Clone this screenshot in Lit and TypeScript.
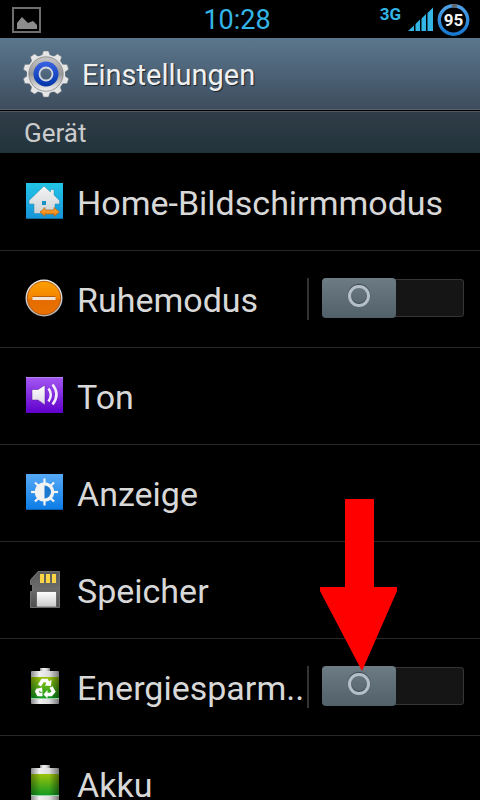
import { LitElement, html, css, svg, nothing, TemplateResult } from "lit";
import { customElement, property } from "lit/decorators.js";

const teeth = [0, 36, 72, 108, 144, 180, 216, 252, 288, 324];

const icons: Record<string, TemplateResult> = {
  home: svg`
    <defs>
      <linearGradient id="g" x2="0" y2="1"><stop stop-color="#22c5e6"/><stop offset="1" stop-color="#1793da"/></linearGradient>
      <linearGradient id="h" x2="0" y2="1"><stop stop-color="#f4f4f4"/><stop offset="1" stop-color="#cfd3d6"/></linearGradient>
      <linearGradient id="o" x2="0" y2="1"><stop stop-color="#ffae3a"/><stop offset="1" stop-color="#ea7a0c"/></linearGradient>
    </defs>
    <rect x="1" y="1" width="37" height="36" fill="url(#g)"/>
    <path d="M1 36.500H38" stroke="#0d6d9c"/>
    <path d="M19 4 L25.500 10 V7.500 H29 V13 L34.500 18.500 V22 H30 V31.500 H9 V22 H4 V18.500 Z" fill="url(#h)" stroke="#2388b0" stroke-width=".5"/>
    <rect x="17" y="19" width="4" height="4" fill="#1793c4"/>
    <path d="M15 30 L20 25.500 V28 H29 V25.500 L34.500 30 L29 34.500 V32 H20 V34.500 Z" fill="url(#o)" stroke="#a8641c" stroke-width=".7"/>`,
  block: svg`
    <defs>
      <linearGradient id="g" x2="0" y2="1"><stop stop-color="#fca000"/><stop offset=".5" stop-color="#f38300"/><stop offset=".55" stop-color="#e66c00"/><stop offset="1" stop-color="#e87000"/></linearGradient>
      <linearGradient id="r" x2="0" y2="1"><stop stop-color="#f5f5f5"/><stop offset="1" stop-color="#b5b5b5"/></linearGradient>
    </defs>
    <circle cx="19" cy="19" r="18.500" fill="url(#r)"/>
    <circle cx="19" cy="19" r="16.700" fill="url(#g)" stroke="#a34a08" stroke-width=".8"/>
    <rect x="7.500" y="18" width="23" height="3" fill="#f1e4d6"/>
    <path d="M7.500 17.500H30.500" stroke="#a85405" stroke-width=".8"/>`,
  sound: svg`
    <defs>
      <linearGradient id="g" x2="0" y2="1"><stop stop-color="#a458f2"/><stop offset="1" stop-color="#6000cc"/></linearGradient>
      <linearGradient id="w" x2="0" y2="1"><stop stop-color="#fff"/><stop offset="1" stop-color="#dcd6e4"/></linearGradient>
    </defs>
    <rect x="1" y="1" width="37" height="36" fill="url(#g)"/>
    <path d="M1 1.500H38" stroke="#b882f3"/>
    <path d="M7 13.500 H13 L20 9 V29 L13 24 H7 Z" fill="url(#w)" stroke="#5a1b9c" stroke-width=".5"/>
    <path d="M23.500 12.500 Q28 18.500 23.500 25.500" fill="none" stroke="#f3edfa" stroke-width="2.500"/>
    <path d="M27.500 8.500 Q35.500 18.500 27.500 28.500" fill="none" stroke="#f3edfa" stroke-width="2.500"/>`,
  display: svg`
    <defs><linearGradient id="g" x2="0" y2="1"><stop stop-color="#57a9f5"/><stop offset="1" stop-color="#0b7ce6"/></linearGradient></defs>
    <rect x="1" y="1" width="37" height="36" fill="url(#g)"/>
    <path d="M1 36.500H38" stroke="#0b5cae"/>
    <g stroke="#f4f4f4" stroke-width="2.200">
      ${[0, 45, 90, 135, 180, 225, 270, 315].map(
        (a) => svg`<path d="M19.500 5.500V11" transform=${`rotate(${a} 19.5 19)`}/>`
      )}
    </g>
    <circle cx="19.500" cy="19" r="9.800" fill="#f2f2f2"/>
    <path d="M19.500 12.500 A6.500 6.500 0 0 1 19.500 25.500 Z" fill="#1c79cf"/>`,
  card: svg`
    <defs>
      <linearGradient id="g" x2="0" y2="1"><stop stop-color="#5a5a5a"/><stop offset=".5" stop-color="#6c6c6c"/><stop offset="1" stop-color="#4e4e4e"/></linearGradient>
      <linearGradient id="w" x2="0" y2="1"><stop stop-color="#fff"/><stop offset="1" stop-color="#c9c9c9"/></linearGradient>
    </defs>
    <path d="M13 1.500 H34.500 V37.500 H5.500 V21.500 H7.500 V14.500 H5.500 V10 Z" fill="url(#g)" stroke="#707070"/>
    <path d="M15 4H19V13H15ZM21 4H25V13H21ZM27 4H31V13H27Z" fill="#fcd544"/>
    <rect x="11.500" y="21.500" width="20" height="15.500" fill="url(#w)" stroke="#555" stroke-width=".7"/>`,
  battery: svg`
    <defs>
      <linearGradient id="g" x2="0" y2="1"><stop stop-color="#9bc40b"/><stop offset="1" stop-color="#119a22"/></linearGradient>
      <linearGradient id="m"><stop stop-color="#8b8b8b"/><stop offset=".3" stop-color="#f0f0f0"/><stop offset=".65" stop-color="#ddd"/><stop offset="1" stop-color="#777"/></linearGradient>
      <linearGradient id="s"><stop stop-color="#000" stop-opacity=".35"/><stop offset=".35" stop-color="#000" stop-opacity="0"/><stop offset=".65" stop-color="#000" stop-opacity="0"/><stop offset="1" stop-color="#000" stop-opacity=".45"/></linearGradient>
    </defs>
    <rect x="15" y="1" width="10" height="4" fill="url(#m)"/>
    <rect x="6" y="4" width="28" height="33" rx="1" fill="url(#m)"/>
    <rect x="6" y="10" width="28" height="21.500" fill="url(#g)"/>
    <rect x="6" y="10" width="28" height="21.500" fill="url(#s)"/>
    <path d="M6 31.500H34" stroke="#8fd6a0"/>`,
};

const recycle = svg`
  <g fill="none" stroke="#fff" stroke-width="3.600">
    <path d="M14.500 18.500 L17.500 13.500 H21.500 L23.500 17"/>
    <path d="M26 20 L28.500 24.500 L26 27.500 H21.500"/>
    <path d="M17.500 27.500 H13.500 L12 24.500 L13 22.500"/>
  </g>
  <path d="M19.500 18.500 L26 19 L26.500 12.500 ZM22.500 23 L18.500 27.500 L22.500 31.500 ZM10.500 22 L17 20.500 L17.500 25.500 Z" fill="#fff"/>`;

@customElement("settings-icon")
export class SettingsIcon extends LitElement {
  @property() name = "";
  static styles = css`
    :host { display: flex; flex: none; }
    svg { width: 40px; height: 40px; }
  `;
  render() {
    const art = this.name === "saver" ? icons.battery : icons[this.name];
    return html`<svg viewBox="0 0 40 40" aria-hidden="true">${art}${this.name === "saver" ? recycle : nothing}</svg>`;
  }
}

interface Item { icon: string; label: string; toggle?: boolean; pointer?: boolean }

const items: Item[] = [
  { icon: "home", label: "Home-Bildschirmmodus" },
  { icon: "block", label: "Ruhemodus", toggle: true },
  { icon: "sound", label: "Ton" },
  { icon: "display", label: "Anzeige" },
  { icon: "card", label: "Speicher" },
  { icon: "saver", label: "Energiesparm..", toggle: true, pointer: true },
  { icon: "battery", label: "Akku" },
];

@customElement("app-root")
export class AppRoot extends LitElement {
  static styles = css`
    :host {
      display: flex;
      flex-direction: column;
      height: 100vh;
      overflow: hidden;
      background: #000;
      color: #d8d8d8;
      font-family: Roboto, "Noto Sans", sans-serif;
    }
    *, *::before, *::after { box-sizing: border-box; }
    .status {
      display: grid;
      grid-template-columns: 1fr auto 1fr;
      align-items: center;
      flex: none;
      height: 38px;
      padding: 0 10px 0 4px;
      color: #33b5e5;
    }
    .status svg { display: block; }
    .notice { margin-left: 8px; }
    .time { font-size: 27px; line-height: 40px; }
    .signals { display: flex; justify-content: flex-end; gap: 4px; height: 38px; }
    .net { font-size: 17px; font-weight: 700; line-height: 26px; margin-right: 3px; }
    .title {
      display: flex;
      align-items: center;
      gap: 12px;
      flex: none;
      height: 72px;
      padding: 0 22px;
      background: linear-gradient(#5b768c, #4c6277 50%, #3e4d5d);
      border-bottom: 1px solid #56636f;
    }
    h1 {
      margin: 0;
      padding-top: 2px;
      color: #f0f0f0;
      font-size: 29px;
      font-weight: 400;
      line-height: 36px;
      text-shadow: 1px 1px 1px #1c242c;
    }
    h2 {
      flex: none;
      margin: 1px 0;
      height: 42px;
      padding: 0 24px;
      border-top: 1px solid #4f5b63;
      background: linear-gradient(#303d48, #22333b);
      color: #ccc;
      font-size: 26px;
      font-weight: 400;
      line-height: 42px;
    }
    ul { flex: 1; min-height: 0; margin: 0; padding: 0; list-style: none; overflow: hidden; }
    li { display: flex; height: 97px; border-bottom: 1px solid #282828; }
    .row {
      display: flex;
      flex: 1;
      align-items: center;
      gap: 12px;
      min-width: 0;
      padding: 0 0 0 25px;
      border: 0;
      background: none;
      color: inherit;
      font: inherit;
      text-align: left;
    }
    .label { font-size: 34px; line-height: 40px; padding-top: 2px; white-space: nowrap; }
    .control {
      position: relative;
      display: flex;
      align-items: center;
      flex: none;
      align-self: center;
      gap: 13px;
      margin-right: 16px;
    }
    .rule { width: 2px; height: 42px; background: #333; }
    .switch {
      appearance: none;
      display: grid;
      width: 142px;
      height: 40px;
      margin: 0 0 2px;
      border-block: 1px solid transparent;
      border-radius: 4px;
      background: linear-gradient(#151515, #151515) padding-box;
      box-shadow: inset 0 0 0 1px #363636;
    }
    .switch::before, .switch::after { content: ""; grid-area: 1 / 1; }
    .switch::before {
      width: 74px;
      height: 40px;
      margin: -1px 0;
      border-radius: 4px;
      background: linear-gradient(#6c7b84, #526169);
    }
    .switch::after {
      width: 22px;
      height: 22px;
      margin: 6px 26px;
      border: 3px solid #b4bfca;
      border-radius: 50%;
      box-shadow: 0 -1px 1px #3c474f, inset 0 -1px 1px #3c474f;
    }
    .switch:checked { justify-content: end; }
    .arrow {
      position: absolute;
      left: 13px;
      bottom: 37px;
      width: 77px;
      height: 172px;
      pointer-events: none;
    }
  `;

  private renderStatus() {
    return html`<div class="status">
      <svg class="notice" width="29" height="26" viewBox="0 0 29 26" aria-hidden="true">
        <rect x="1" y="1" width="27" height="24" fill="none" stroke="#6e6e6e" stroke-width="2" />
        <path d="M5 22V16L10 10L16 16L21 14L25 18V22Z" fill="#8c8c8c" />
      </svg>
      <span class="time">10:28</span>
      <div class="signals">
        <span class="net">3G</span>
        <svg width="25" height="38" viewBox="0 0 25 38" aria-hidden="true">
          <path d="M0 30L6 24.500V30ZM7.500 23L12 18.500V30H7.500ZM13.500 17.500L18 13V30H13.500ZM19.500 12L25 6.500V30H19.500Z" fill="#33b5e5" />
        </svg>
        <svg width="33" height="38" viewBox="0 0 33 38" role="img" aria-label="95 %">
          <defs><linearGradient id="ring" x2="0" y2="1"><stop stop-color="#4f9fe6" /><stop offset="1" stop-color="#1878cf" /></linearGradient></defs>
          <circle cx="16.500" cy="19" r="14.200" fill="none" stroke="url(#ring)" stroke-width="3.400" />
          <path d="M15 4.900A14.200 14.200 0 0 1 20 5.200" fill="none" stroke="#666" stroke-width="3.400" />
          <text x="16.500" y="25" fill="#f4f4f4" font-size="17" font-weight="700" text-anchor="middle">95</text>
        </svg>
      </div>
    </div>`;
  }

  private renderGear() {
    return html`<svg width="48" height="48" viewBox="0 0 48 48" aria-hidden="true">
      <defs>
        <linearGradient id="metal" x2="0" y2="1"><stop stop-color="#c8c8c8" /><stop offset=".5" stop-color="#969696" /><stop offset="1" stop-color="#f2f2f2" /></linearGradient>
        <linearGradient id="blue" x2="0" y2="1"><stop stop-color="#3a62e4" /><stop offset="1" stop-color="#0034a8" /></linearGradient>
        <linearGradient id="hole" x2="0" y2="1"><stop stop-color="#587087" /><stop offset="1" stop-color="#485d72" /></linearGradient>
      </defs>
      <g fill="#e6e6e6" stroke="#747b82" stroke-width=".5">
        ${teeth.map((a) => svg`<path d="M19 8L21.500 1H26.500L29 8Z" transform=${`rotate(${a} 24 24)`}/>`)}
      </g>
      <circle cx="24" cy="24" r="19.200" fill="#e4e4e4" />
      <circle cx="24" cy="24" r="17.200" fill="url(#metal)" stroke="#888" stroke-width=".8" />
      <circle cx="24" cy="24" r="12.500" fill="url(#blue)" />
      <circle cx="24" cy="24" r="6.500" fill="url(#hole)" stroke="#d4d8e0" stroke-width="1.800" />
    </svg>`;
  }

  private renderItem(item: Item) {
    const body = html`<settings-icon name=${item.icon}></settings-icon><span class="label">${item.label}</span>`;
    if (!item.toggle) return html`<li><button class="row" type="button">${body}</button></li>`;
    return html`<li>
      <label class="row" for=${item.icon}>${body}</label>
      <div class="control">
        <span class="rule"></span>
        <input class="switch" id=${item.icon} type="checkbox" role="switch" />
        ${item.pointer
          ? html`<svg class="arrow" viewBox="0 0 77 172" aria-hidden="true">
              <path d="M25 0H54V88H77V92L42 172L0 92V88H25Z" fill="#f00" />
            </svg>`
          : nothing}
      </div>
    </li>`;
  }

  render() {
    return html`
      ${this.renderStatus()}
      <header class="title">${this.renderGear()}<h1>Einstellungen</h1></header>
      <h2>Gerät</h2>
      <ul>${items.map((i) => this.renderItem(i))}</ul>
    `;
  }
}
